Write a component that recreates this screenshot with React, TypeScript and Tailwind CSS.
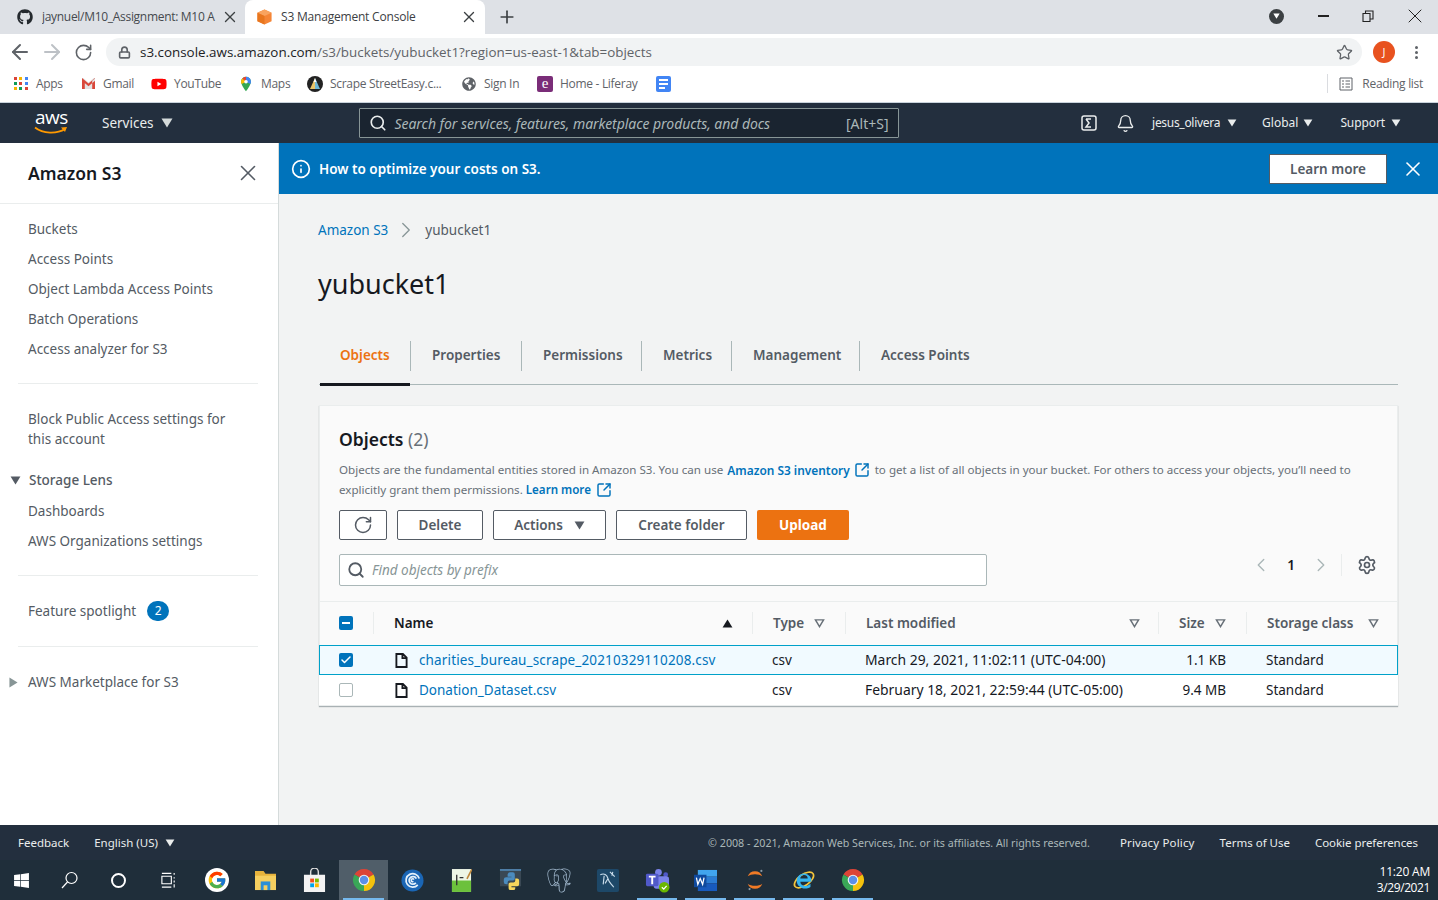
import { ArrowLeft, ArrowRight, RotateCw, Lock, Star, Plus, X, Search, Bell, Info, ChevronRight, ChevronLeft, Settings, SquareArrowOutUpRight, Check } from "lucide-react";
import { FaGithub, FaYoutube, FaGlobeAmericas, FaWindows } from "react-icons/fa";
import { FcGoogle } from "react-icons/fc";
import { SiPostgresql } from "react-icons/si";

const ember = "font-['Noto_Sans','Open_Sans',sans-serif]";

function Caret({ className = "" }: { className?: string }) {
  return (
    <svg viewBox="0 0 12 10" className={className}>
      <path d="M0.500 0.500h11L6 9.500z" fill="currentColor" />
    </svg>
  );
}

function HollowCaret() {
  return (
    <svg viewBox="0 0 12 10" className="w-[11px] h-[9px] text-[#687078]">
      <path d="M1.500 1h9L6 8.500z" fill="none" stroke="currentColor" strokeWidth="1.6" />
    </svg>
  );
}

function ChromeLogo({ size = 24 }: { size?: number }) {
  return (
    <svg viewBox="0 0 24 24" width={size} height={size}>
      <path d="M12 12L2.470 6.500A11 11 0 0 1 21.530 6.500z" fill="#db4437" />
      <path d="M12 12L21.530 6.500A11 11 0 0 1 12 23z" fill="#f4c20d" />
      <path d="M12 12L12 23A11 11 0 0 1 2.470 6.500z" fill="#3aa757" />
      <circle cx="12" cy="12" r="5.300" fill="#f1f3f4" />
      <circle cx="12" cy="12" r="4.200" fill="#5b8fe8" />
    </svg>
  );
}

function Tabs() {
  return (
    <div className="h-[34px] bg-[#dee1e6] flex items-end pl-2 font-['Open_Sans',sans-serif] text-[12px] text-[#45494e]">
      <div className="w-[237px] h-[34px] flex items-center pl-[9px]">
        <FaGithub className="w-4 h-4 text-[#24292e] mr-[9px] shrink-0" />
        <span className="w-[176px] overflow-hidden whitespace-nowrap tracking-[-0.3px]">jaynuel/M10_Assignment: M10 A</span>
        <X className="w-[18px] h-[18px] text-[#3c4043] ml-[3px]" strokeWidth={1.8} />
      </div>
      <div className="w-[240px] h-[34px] bg-white rounded-t-lg flex items-center pl-[11px] pr-[7px] text-[#3c4043]">
        <svg viewBox="0 0 18 18" className="w-[17px] h-[18px] mr-[8px]">
          <path d="M9 1l7.500 3.500v9L9 17l-7.500-3.500v-9z" fill="#f58536" />
          <path d="M9 1l7.500 3.500L9 8 1.500 4.500z" fill="#f9a35f" />
          <path d="M9 8v9l-7.500-3.500v-9z" fill="#e8761e" />
        </svg>
        <span className="flex-1 tracking-[-0.2px]">S3 Management Console</span>
        <X className="w-[18px] h-[18px] text-[#3c4043]" strokeWidth={1.8} />
      </div>
      <div className="h-[34px] flex items-center ml-[12px]">
        <Plus className="w-[20px] h-[20px] text-[#3c4043]" strokeWidth={2} />
      </div>
      <div className="flex-1" />
      <div className="h-[34px] flex items-center pb-[2px]">
        <div className="w-[15px] h-[15px] rounded-full bg-[#3c4043] flex items-center justify-center mr-[34px]">
          <Caret className="w-[7px] h-[6px] text-white" />
        </div>
        <span className="w-[11px] h-[1.500px] bg-[#222] mr-[33px]" />
        <svg viewBox="0 0 12 12" className="w-[12px] h-[12px] mr-[29px] text-[#222]">
          <path d="M1 3.500h7v8H1zM3.500 3.500V1h7.500v8H8" fill="none" stroke="currentColor" strokeWidth="1.100" />
        </svg>
        <X className="w-[24px] h-[24px] text-[#222] mr-[11px]" strokeWidth={1} />
      </div>
    </div>
  );
}

function AddressBar() {
  return (
    <div className="h-[34px] bg-white flex items-center pt-[2px] font-['Open_Sans',sans-serif]">
      <ArrowLeft className="w-[24px] h-[24px] text-[#5f6368] ml-[8px]" strokeWidth={2} />
      <ArrowRight className="w-[24px] h-[24px] text-[#bdc1c6] ml-[8px]" strokeWidth={2} />
      <RotateCw className="w-[19px] h-[19px] text-[#5f6368] ml-[10px]" strokeWidth={2} />
      <div className="ml-[13px] w-[1256px] h-[28px] rounded-full bg-[#f1f3f4] flex items-center pl-[12px] pr-[9px]">
        <Lock className="w-[13px] h-[13px] text-[#5f6368] mr-[9px]" strokeWidth={3} />
        <span className="text-[13.400px] text-[#202124] flex-1">
          s3.console.aws.amazon.com<span className="text-[#5f6368]">/s3/buckets/yubucket1?region=us-east-1&amp;tab=objects</span>
        </span>
        <Star className="w-[17px] h-[17px] text-[#5f6368]" strokeWidth={1.8} />
      </div>
      <div className="ml-[11px] w-[22px] h-[22px] rounded-full bg-[#e8521f] text-white text-[11px] flex items-center justify-center">J</div>
      <div className="ml-[20px] flex flex-col gap-[2px]">
        <span className="w-[3px] h-[3px] rounded-full bg-[#5f6368]" />
        <span className="w-[3px] h-[3px] rounded-full bg-[#5f6368]" />
        <span className="w-[3px] h-[3px] rounded-full bg-[#5f6368]" />
      </div>
    </div>
  );
}

function Bookmark({ icon, label, w }: { icon: React.ReactNode; label: string; w: string }) {
  return (
    <div className={`flex items-center ${w}`}>
      <span className="w-[16px] h-[16px] flex items-center justify-center mr-[7px] shrink-0">{icon}</span>
      <span className="text-[12px] text-[#5f6368] tracking-[-0.3px] whitespace-nowrap">{label}</span>
    </div>
  );
}

function Bookmarks() {
  const dots = ["#db4437", "#f4b400", "#4285f4", "#0f9d58", "#db4437", "#4285f4", "#f4b400", "#0f9d58", "#db4437"];
  return (
    <div className="h-[35px] bg-white border-b border-[#c9d3dc] flex items-center pl-[13px] pb-[3px] font-['Open_Sans',sans-serif]">
      <Bookmark
        w="w-[67px]"
        label="Apps"
        icon={
          <span className="grid grid-cols-3 gap-[2px] w-[14px]">
            {dots.map((c, i) => (
              <span key={i} className="w-[3px] h-[3px]" style={{ background: c }} />
            ))}
          </span>
        }
      />
      <Bookmark
        w="w-[71px]"
        label="Gmail"
        icon={
          <svg viewBox="0 0 16 14" className="w-[15px] h-[13px]">
            <path d="M1 13V1h1.500L8 6l5.500-5H15v12z" fill="#e3e3e3" />
            <path d="M1 13V1.500l3 2.500V13zM15 13V1.500l-3 2.500V13zM1 1l7 6 7-6v3L8 10 1 4z" fill="#d9473a" />
          </svg>
        }
      />
      <Bookmark w="w-[87px]" label="YouTube" icon={<FaYoutube className="w-[16px] h-[16px] text-[#f00]" />} />
      <Bookmark
        w="w-[69px]"
        label="Maps"
        icon={
          <svg viewBox="0 0 14 18" className="w-[12px] h-[16px]">
            <path d="M7 0.500A5.800 5.800 0 0 0 1.200 6.300C1.200 10 7 17.500 7 17.500S12.800 10 12.800 6.300A5.800 5.800 0 0 0 7 0.500z" fill="#34a853" />
            <path d="M7 0.500A5.800 5.800 0 0 0 2.600 2.500l4.400 4z" fill="#ea4335" />
            <path d="M7 0.500a5.800 5.800 0 0 1 5.800 5.800c0 .8-.3 1.800-.8 2.800L7 6.500z" fill="#4285f4" />
            <path d="M2.600 2.500A5.800 5.800 0 0 0 1.200 6.300c0 .9.3 1.800.8 2.800L7 6.500z" fill="#fbbc04" />
            <circle cx="7" cy="6.300" r="2.100" fill="#fff" />
          </svg>
        }
      />
      <Bookmark
        w="w-[154px]"
        label="Scrape StreetEasy.c..."
        icon={
          <svg viewBox="0 0 16 16" className="w-[16px] h-[16px]">
            <circle cx="8" cy="8" r="8" fill="#222" />
            <path d="M8 2l-5 11h5z" fill="#e9c46a" />
            <path d="M8 2l5 11H8z" fill="#6fb7d6" />
            <path d="M8 2l-1.500 4h3z" fill="#fff" />
          </svg>
        }
      />
      <Bookmark w="w-[76px]" label="Sign In" icon={<FaGlobeAmericas className="w-[14px] h-[14px] text-[#5f6368]" />} />
      <Bookmark
        w="w-[119px]"
        label="Home - Liferay"
        icon={
          <span className="w-[16px] h-[16px] rounded-[2px] bg-[#7a2d78] text-white text-[15px] leading-[15px] text-center font-['Liberation_Serif',serif]">e</span>
        }
      />
      <span className="w-[15px] h-[16px] rounded-[2px] bg-[#4285f4] flex flex-col justify-center gap-[2px] px-[3px]">
        <span className="h-[2px] w-[9px] bg-white" />
        <span className="h-[2px] w-[9px] bg-white" />
        <span className="h-[2px] w-[6px] bg-white" />
      </span>
      <div className="flex-1" />
      <div className="w-px h-[19px] bg-[#dadce0] mr-[11px]" />
      <svg viewBox="0 0 14 14" className="w-[14px] h-[14px] mr-[9px] text-[#5f6368]">
        <path d="M1 1h12v12H1zM3 4h2M3 7h2M3 10h2M6.500 4h4.500M6.500 7h4.500M6.500 10h4.500" fill="none" stroke="currentColor" strokeWidth="1" />
      </svg>
      <span className="text-[12px] text-[#5f6368] tracking-[-0.3px] mr-[15px]">Reading list</span>
    </div>
  );
}

function AwsNav() {
  return (
    <div className={`h-[40px] bg-[#232f3e] flex items-center text-[12px] text-[#eaeded] ${ember}`}>
      <div className="w-[102px] relative h-full">
        <span className="absolute left-[35px] top-[2px] text-[19px] leading-[24px] text-white font-['Open_Sans',sans-serif] tracking-[-0.5px]">aws</span>
        <svg viewBox="0 0 34 10" className="absolute left-[34px] top-[23px] w-[34px] h-[10px]">
          <path d="M1 1.500C9 8 23 8 31 3" fill="none" stroke="#ff9900" strokeWidth="1.800" />
          <path d="M27 1.500l6-.5-2 5z" fill="#ff9900" />
        </svg>
      </div>
      <span className="text-[13.500px]">Services</span>
      <Caret className="w-[12px] h-[10px] ml-[7px] text-[#d5dbdb]" />
      <div className="ml-[186px] w-[540px] h-[30px] border border-[#879596] bg-[#1a2430] flex items-center pl-[9px] pr-[9px] rounded-[1px]">
        <Search className="w-[18px] h-[18px] text-[#eaeded] mr-[8px]" strokeWidth={2.2} />
        <span className="flex-1 italic text-[#aab7b8] text-[14px] tracking-[-0.05px]">Search for services, features, marketplace products, and docs</span>
        <span className="text-[#aab7b8] text-[14px]">[Alt+S]</span>
      </div>
      <div className="flex-1" />
      <svg viewBox="0 0 16 16" className="w-[16px] h-[16px] mr-[19px]">
        <rect x="1" y="1" width="14" height="14" rx="2" fill="none" stroke="#eaeded" strokeWidth="1.500" />
        <path d="M5 4h5M5 4l3 4-3 4h5" fill="none" stroke="#eaeded" strokeWidth="1.500" />
      </svg>
      <Bell className="w-[19px] h-[19px] mr-[17px]" strokeWidth={1.7} />
      <span className="tracking-[-0.3px]">jesus_olivera</span>
      <Caret className="w-[10px] h-[8px] ml-[7px] mr-[25px]" />
      <span>Global</span>
      <Caret className="w-[10px] h-[8px] ml-[5px] mr-[27px]" />
      <span className="tracking-[-0.1px]">Support</span>
      <Caret className="w-[10px] h-[8px] ml-[6px] mr-[37px]" />
    </div>
  );
}

function Sidebar() {
  const link = "text-[13.500px] leading-[20px] text-[#545b64]";
  return (
    <aside className={`w-[279px] shrink-0 bg-white border-r border-[#d5dbdb] ${ember}`}>
      <div className="h-[61px] border-b border-[#eaeded] flex items-center pl-[28px] pr-[17px]">
        <span className="text-[17.500px] font-semibold text-[#16191f] flex-1 pt-[1px]">Amazon S3</span>
        <X className="w-[26px] h-[26px] text-[#545b64]" strokeWidth={1.5} />
      </div>
      <div className="pl-[28px] pt-[15px] flex flex-col gap-[10px]">
        <span className={link}>Buckets</span>
        <span className={link}>Access Points</span>
        <span className={link}>Object Lambda Access Points</span>
        <span className={link}>Batch Operations</span>
        <span className={link}>Access analyzer for S3</span>
      </div>
      <div className="ml-[18px] mr-[20px] mt-[24px] border-t border-[#eaeded]" />
      <div className="pl-[28px] pt-[25px]">
        <p className={`${link} w-[215px]`}>Block Public Access settings for this account</p>
      </div>
      <div className="pl-[10px] mt-[21px] flex items-center">
        <Caret className="w-[11px] h-[9px] text-[#545b64] mr-[8px]" />
        <span className="text-[13.500px] leading-[20px] font-medium text-[#545b64]">Storage Lens</span>
      </div>
      <div className="pl-[28px] pt-[11px] flex flex-col gap-[10px]">
        <span className={link}>Dashboards</span>
        <span className={link}>AWS Organizations settings</span>
      </div>
      <div className="ml-[18px] mr-[20px] mt-[24px] border-t border-[#eaeded]" />
      <div className="pl-[28px] pt-[25px] flex items-center">
        <span className={link}>Feature spotlight</span>
        <span className="ml-[11px] w-[22px] h-[20px] rounded-full bg-[#0073bb] text-white text-[12px] flex items-center justify-center">2</span>
      </div>
      <div className="ml-[18px] mr-[20px] mt-[25px] border-t border-[#eaeded]" />
      <div className="pl-[9px] pt-[25px] flex items-center">
        <svg viewBox="0 0 10 12" className="w-[9px] h-[11px] text-[#879596] mr-[10px]">
          <path d="M0.500 0.500v11L9.500 6z" fill="currentColor" />
        </svg>
        <span className={link}>AWS Marketplace for S3</span>
      </div>
    </aside>
  );
}

function Banner() {
  return (
    <div className="h-[51px] bg-[#0073bb] flex items-center pl-[12px] pr-[13px] text-white">
      <Info className="w-[20px] h-[20px] mr-[8px]" strokeWidth={2} />
      <span className="text-[13.500px] font-semibold flex-1 pt-[1px]">How to optimize your costs on S3.</span>
      <div className="w-[118px] h-[30px] pt-[1px] bg-white border border-[#545b64] text-[#545b64] text-[13.500px] font-semibold flex items-center justify-center mr-[14px]">
        Learn more
      </div>
      <X className="w-[24px] h-[24px]" strokeWidth={1.6} />
    </div>
  );
}

function ToolButton({ children, w }: { children: React.ReactNode; w: string }) {
  return (
    <div className={`${w} h-[30px] bg-white border border-[#545b64] rounded-[2px] text-[13.500px] font-semibold text-[#545b64] flex items-center justify-center`}>
      {children}
    </div>
  );
}

function Checkbox({ state }: { state: "on" | "off" | "mixed" }) {
  if (state === "off") return <span className="block w-[14px] h-[14px] rounded-[2px] bg-white border border-[#aab7b8]" />;
  return (
    <span className="w-[14px] h-[14px] rounded-[2px] bg-[#0073bb] flex items-center justify-center">
      {state === "on" ? <Check className="w-[12px] h-[12px] text-white" strokeWidth={3} /> : <span className="w-[8px] h-[2px] bg-white" />}
    </span>
  );
}

function FileIcon() {
  return (
    <svg viewBox="0 0 14 16" className="w-[13px] h-[15px] mr-[11px] text-[#16191f]">
      <path d="M1.500 1h7l4 4v10h-11zM8 1v4.500h4.500" fill="none" stroke="currentColor" strokeWidth="2" />
    </svg>
  );
}

const columns = "grid-cols-[53px_379px_93px_313px_88px_1fr]";

function HeaderCell({ label }: { label: string }) {
  return (
    <div className="h-[22px] border-l border-[#eaeded] flex items-center pl-[20px] gap-[10px]">
      <span>{label}</span>
      <HollowCaret />
    </div>
  );
}

function FileRow({ name, modified, size, selected }: { name: string; modified: string; size: string; selected?: boolean }) {
  return (
    <div className={`grid ${columns} -mx-px h-[30px] items-center text-[13.500px] text-[#16191f] ${selected ? "bg-[#f1faff] border border-[#00a1c9]" : "bg-white border border-transparent"}`}>
      <div className="pl-[19px]">
        <Checkbox state={selected ? "on" : "off"} />
      </div>
      <div className="flex items-center pl-[22px]">
        <FileIcon />
        <span className={`text-[#0073bb] ${selected ? "tracking-[0.14px]" : ""}`}>{name}</span>
      </div>
      <div className="pl-[20px]">csv</div>
      <div className="pl-[20px] whitespace-nowrap text-[13.900px]">{modified}</div>
      <div className="pr-[20px] text-right">{size}</div>
      <div className="pl-[20px]">Standard</div>
    </div>
  );
}

function ObjectsCard() {
  return (
    <section className="mx-[40px] mt-[20px] bg-[#fafafa] border border-[#eaeded] shadow-[0_1px_1px_0_rgba(0,28,36,0.3)]">
      <div className="pl-[19px] pr-[20px] pt-[21px] h-[195px]">
        <h2 className="text-[17.500px] leading-[24px] font-semibold text-[#16191f]">
          Objects <span className="font-normal text-[#687078]">(2)</span>
        </h2>
        <div className="mt-[9px] text-[11.600px] leading-[20px] text-[#687078] whitespace-nowrap">
          <div className="flex items-center h-[20px]">
            <span>Objects are the fundamental entities stored in Amazon S3. You can use</span>
            <span className="ml-[4px] text-[11.900px] text-[#0073bb] font-semibold">Amazon S3 inventory</span>
            <SquareArrowOutUpRight className="w-[16px] h-[16px] text-[#0073bb] ml-[4px] mr-[5px]" strokeWidth={2.2} />
            <span>to get a list of all objects in your bucket. For others to access your objects, you’ll need to</span>
          </div>
          <div className="flex items-center h-[20px]">
            <span>explicitly grant them permissions.</span>
            <span className="ml-[3px] text-[#0073bb] font-semibold">Learn more</span>
            <SquareArrowOutUpRight className="w-[16px] h-[16px] text-[#0073bb] ml-[5px]" strokeWidth={2.2} />
          </div>
        </div>
        <div className="mt-[10px] flex gap-[10px]">
          <ToolButton w="w-[48px]">
            <RotateCw className="w-[20px] h-[20px]" strokeWidth={1.8} />
          </ToolButton>
          <ToolButton w="w-[86px]">Delete</ToolButton>
          <ToolButton w="w-[113px]">
            Actions
            <Caret className="w-[11px] h-[9px] ml-[11px]" />
          </ToolButton>
          <ToolButton w="w-[131px]">Create folder</ToolButton>
          <div className="w-[92px] h-[30px] bg-[#ec7211] rounded-[2px] text-[13.500px] font-bold text-white flex items-center justify-center">Upload</div>
        </div>
        <div className="mt-[14px] flex items-start">
          <div className="w-[648px] h-[32px] bg-white border border-[#aab7b8] rounded-[2px] flex items-center pl-[7px]">
            <Search className="w-[18px] h-[18px] text-[#545b64] mr-[7px]" strokeWidth={2.4} />
            <span className="italic text-[13.500px] text-[#879596]">Find objects by prefix</span>
          </div>
          <div className="flex-1" />
          <div className="flex items-center h-[22px] text-[#16191f]">
            <ChevronLeft className="w-[22px] h-[22px] text-[#aab7b8]" strokeWidth={1.5} />
            <span className="text-[13.500px] font-semibold mx-[15px]">1</span>
            <ChevronRight className="w-[22px] h-[22px] text-[#aab7b8]" strokeWidth={1.5} />
            <div className="w-px h-[22px] bg-[#eaeded] ml-[9px] mr-[15px]" />
            <Settings className="w-[20px] h-[20px] text-[#545b64]" strokeWidth={2} />
          </div>
        </div>
      </div>
      <div className="border-t border-[#eaeded] h-[44px]">
        <div className={`grid ${columns} h-full items-center text-[13.500px] font-semibold text-[#545b64] pb-[1px]`}>
          <div className="pl-[19px]">
            <Checkbox state="mixed" />
          </div>
          <div className="h-[22px] border-l border-[#eaeded] flex items-center pl-[20px] pr-[19px] justify-between text-[#16191f]">
            <span>Name</span>
            <Caret className="w-[11px] h-[9px] text-[#16191f] rotate-180" />
          </div>
          <HeaderCell label="Type" />
          <div className="h-[22px] border-l border-[#eaeded] flex items-center pl-[20px] pr-[18px] justify-between">
            <span>Last modified</span>
            <HollowCaret />
          </div>
          <HeaderCell label="Size" />
          <div className="h-[22px] border-l border-[#eaeded] flex items-center pl-[20px] pr-[18px] justify-between">
            <span>Storage class</span>
            <HollowCaret />
          </div>
        </div>
      </div>
      <FileRow selected name="charities_bureau_scrape_20210329110208.csv" modified="March 29, 2021, 11:02:11 (UTC-04:00)" size="1.1 KB" />
      <FileRow name="Donation_Dataset.csv" modified="February 18, 2021, 22:59:44 (UTC-05:00)" size="9.4 MB" />
    </section>
  );
}

function Main() {
  const tab = "h-[30px] pl-[21px] flex items-center border-l border-[#aab7b8]";
  return (
    <main className={`flex-1 min-w-0 bg-[#f2f3f3] ${ember}`}>
      <Banner />
      <div className="pl-[39px] pt-[26px] flex items-center text-[13.500px] leading-[20px]">
        <span className="text-[#0073bb]">Amazon S3</span>
        <ChevronRight className="w-[26px] h-[26px] ml-[5px] mr-[6px] -my-[3px] text-[#879596]" strokeWidth={1.2} />
        <span className="text-[#545b64]">yubucket1</span>
      </div>
      <h1 className="pl-[39px] mt-[26px] text-[27px] leading-[36px] text-[#16191f]">yubucket1</h1>
      <div className="mx-[40px] mt-[25px] h-[58px] border-b border-[#aab7b8] flex items-center text-[13.500px] font-semibold text-[#545b64]">
        <div className="relative h-[58px] w-[91px] pl-[21px] flex items-center text-[#ec7211]">
          Objects
          <span className="absolute left-[1px] right-0 bottom-[-1px] h-[3px] bg-[#16191f]" />
        </div>
        <div className={`${tab} w-[111px]`}>Properties</div>
        <div className={`${tab} w-[120px]`}>Permissions</div>
        <div className={`${tab} w-[90px]`}>Metrics</div>
        <div className={`${tab} w-[128px]`}>Management</div>
        <div className={tab}>Access Points</div>
      </div>
      <ObjectsCard />
    </main>
  );
}

function Footer() {
  return (
    <div className={`h-[35px] bg-[#232f3e] flex items-center pl-[18px] text-[11.500px] text-[#eaeded] ${ember}`}>
      <span>Feedback</span>
      <span className="ml-[25px]">English (US)</span>
      <Caret className="w-[10px] h-[8px] ml-[7px]" />
      <div className="flex-1" />
      <span className="text-[10.700px] text-[#aab7b8] pt-[1px]">© 2008 - 2021, Amazon Web Services, Inc. or its affiliates. All rights reserved.</span>
      <span className="ml-[30px] tracking-[0.15px]">Privacy Policy</span>
      <span className="ml-[25px]">Terms of Use</span>
      <span className="ml-[25px] mr-[20px] tracking-[-0.05px]">Cookie preferences</span>
    </div>
  );
}

function TaskIcon({ children, open, active }: { children: React.ReactNode; open?: boolean; active?: boolean }) {
  return (
    <div className={`w-[48.900px] h-[40px] flex items-center justify-center relative ${active ? "bg-[#505e69]" : ""}`}>
      {children}
      {open && <span className="absolute bottom-0 left-[4px] right-[4px] h-[2px] bg-[#76b9ed]" />}
    </div>
  );
}

function Taskbar() {
  return (
    <div className="h-[40px] bg-[#1f2e3a] flex items-center pl-0 font-['Open_Sans',sans-serif] overflow-hidden">
      <div className="flex items-center -ml-[3px]">
        <TaskIcon>
          <FaWindows className="w-[17px] h-[17px] text-white" />
        </TaskIcon>
        <TaskIcon>
          <svg viewBox="0 0 18 18" className="w-[18px] h-[18px]">
            <circle cx="10.500" cy="7" r="5.500" fill="none" stroke="#fff" strokeWidth="1.200" />
            <path d="M6.500 11L1 17" stroke="#fff" strokeWidth="1.200" />
          </svg>
        </TaskIcon>
        <TaskIcon>
          <span className="w-[15px] h-[15px] rounded-full border-2 border-white -ml-[2px]" />
        </TaskIcon>
        <TaskIcon>
          <svg viewBox="0 0 18 18" className="w-[17px] h-[17px]">
            <path d="M2 4.500h10v8H2zM2 1.500h10M2 16h10M15 1v2M15 5.500v1.500M15 9v2M15 13v3.500" stroke="#fff" strokeWidth="1.200" fill="none" />
          </svg>
        </TaskIcon>
        <TaskIcon>
          <span className="w-[24px] h-[24px] rounded-full bg-white flex items-center justify-center">
            <FcGoogle className="w-[20px] h-[20px]" />
          </span>
        </TaskIcon>
        <TaskIcon>
          <svg viewBox="0 0 24 22" className="w-[23px] h-[21px]">
            <path d="M1 1h9l2 3h11v17H1z" fill="#e7b33c" />
            <rect x="1" y="6" width="22" height="15" fill="#f6cf5f" />
            <rect x="7" y="12" width="10" height="9" fill="#2c8fd6" />
            <rect x="10" y="16" width="4" height="5" fill="#f6cf5f" />
          </svg>
        </TaskIcon>
        <TaskIcon>
          <svg viewBox="0 0 24 26" className="w-[23px] h-[25px]">
            <path d="M8 8V4a4 4 0 0 1 8 0v4" fill="none" stroke="#ddd" strokeWidth="1.500" />
            <rect x="1" y="7" width="22" height="18" fill="#f3f3f3" />
            <rect x="7.500" y="11" width="4" height="4" fill="#f25022" />
            <rect x="12.500" y="11" width="4" height="4" fill="#7fba00" />
            <rect x="7.500" y="16" width="4" height="4" fill="#00a4ef" />
            <rect x="12.500" y="16" width="4" height="4" fill="#ffb900" />
          </svg>
        </TaskIcon>
        <TaskIcon open active>
          <ChromeLogo size={24} />
        </TaskIcon>
        <TaskIcon>
          <svg viewBox="0 0 24 24" className="w-[23px] h-[23px]">
            <circle cx="12" cy="12" r="11.500" fill="#1a66b5" />
            <path d="M17.500 16.500A7 7 0 1 1 19 10" fill="none" stroke="#e4f1fb" strokeWidth="1.800" />
            <path d="M15.500 14.500A4 4 0 1 1 16 10" fill="none" stroke="#e4f1fb" strokeWidth="1.800" />
            <path d="M13 13a1.500 1.500 0 1 1 .5-2" fill="none" stroke="#e4f1fb" strokeWidth="1.600" />
          </svg>
        </TaskIcon>
        <TaskIcon>
          <svg viewBox="0 0 22 26" className="w-[21px] h-[25px]">
            <rect x="1" y="1" width="20" height="24" fill="#eef6e6" />
            <rect x="1" y="13" width="20" height="12" fill="#6cc13c" />
            <path d="M6 7v11M9 10h4" stroke="#333" strokeWidth="1.400" />
            <path d="M16 11l5-10 1.500.8-5 10z" fill="#c08a3e" />
          </svg>
        </TaskIcon>
        <TaskIcon>
          <svg viewBox="0 0 24 26" className="w-[23px] h-[25px]">
            <rect x="1" y="1" width="22" height="18" fill="#3a4854" />
            <rect x="1" y="1" width="22" height="2" fill="#4e7ea6" />
            <path d="M9 9V6.500a3 3 0 0 1 3-2h2.500a2 2 0 0 1 2 2V11a2 2 0 0 1-2 2H11a2 2 0 0 0-2 2v2H7.500a2.500 2.500 0 0 1-2.500-2.500V12a2.500 2.500 0 0 1 2.500-2.500H13V9z" fill="#4b8bbe" />
            <path d="M17 11v2a2 2 0 0 1-2 2h-3a2 2 0 0 0-2 2v4a2 2 0 0 0 2 2h3a2 2 0 0 0 2-2v-1h-4v-1h6a2 2 0 0 0 2-2v-4a2 2 0 0 0-2-2z" fill="#f6d55c" />
          </svg>
        </TaskIcon>
        <TaskIcon>
          <SiPostgresql className="w-[24px] h-[25px] text-[#9fb6cb]" />
        </TaskIcon>
        <TaskIcon>
          <svg viewBox="0 0 24 26" className="w-[24px] h-[25px]">
            <rect x="0.500" y="1" width="23" height="24" rx="2" fill="#1d4868" />
            <path d="M4 7c4-2 7 0 8 4s3 5 6 9M8 8l-1 9M12 11l-3 5M14 4l5 5M17 4l-1 4" fill="none" stroke="#c9dcea" strokeWidth="1.200" />
          </svg>
        </TaskIcon>
        <TaskIcon open>
          <svg viewBox="0 0 26 26" className="w-[25px] h-[25px]">
            <circle cx="14" cy="4.500" r="3.500" fill="#7b83eb" />
            <circle cx="21.500" cy="7" r="2.500" fill="#5059c9" />
            <rect x="9" y="8.500" width="16" height="13" rx="3" fill="#7b83eb" />
            <rect x="1" y="6" width="13" height="13" rx="1.500" fill="#5059c9" />
            <path d="M4 9h7M7.500 9v8" stroke="#fff" strokeWidth="2" />
            <circle cx="20" cy="20" r="5.500" fill="#6bb700" />
            <path d="M17.500 20l2 2 3-3.500" fill="none" stroke="#fff" strokeWidth="1.300" />
          </svg>
        </TaskIcon>
        <TaskIcon open>
          <svg viewBox="0 0 26 24" className="w-[25px] h-[23px]">
            <rect x="5" y="1" width="20" height="7" fill="#41a5ee" />
            <rect x="5" y="8" width="20" height="7" fill="#2b7cd3" />
            <rect x="5" y="15" width="20" height="8" fill="#185abd" />
            <rect x="1" y="6" width="13" height="13" fill="#0f4a9e" />
            <path d="M3.500 9l1.500 7 2.500-6 2.500 6 1.500-7" fill="none" stroke="#fff" strokeWidth="1.300" />
          </svg>
        </TaskIcon>
        <TaskIcon open>
          <svg viewBox="0 0 22 26" className="w-[20px] h-[24px]">
            <path d="M3 9a8.500 8.500 0 0 1 16 0c-3.500-3-12.500-3-16 0zM3 17a8.500 8.500 0 0 0 16 0c-3.500 3-12.500 3-16 0z" fill="#ef7a26" />
            <circle cx="5" cy="23" r="1.200" fill="#8a9aa6" />
            <circle cx="18" cy="3" r="1.200" fill="#8a9aa6" />
          </svg>
        </TaskIcon>
        <TaskIcon open>
          <svg viewBox="0 0 26 26" className="w-[24px] h-[24px]">
            <ellipse cx="13" cy="13" rx="12" ry="6" fill="none" stroke="#f5c63c" strokeWidth="1.800" transform="rotate(-35 13 13)" />
            <path d="M5 13a8 8 0 0 1 16 2H9c0 5 7 6 11 2v3.500c-6 4-15 1-15-7.500zM9 11.500h8a4 4 0 0 0-8 0z" fill="#35b5f0" fillRule="evenodd" />
          </svg>
        </TaskIcon>
        <TaskIcon open>
          <ChromeLogo size={24} />
        </TaskIcon>
      </div>
      <div className="flex-1" />
      <div className="text-right text-[12px] leading-[16px] text-white pr-[8px] tracking-[-0.2px]">
        <div>11:20 AM</div>
        <div className="tracking-[-0.4px]">3/29/2021</div>
      </div>
    </div>
  );
}

export default function App() {
  return (
    <div className="w-[1438px] h-[900px] flex flex-col overflow-hidden bg-white">
      <Tabs />
      <AddressBar />
      <Bookmarks />
      <AwsNav />
      <div className="flex flex-1 min-h-0">
        <Sidebar />
        <Main />
      </div>
      <Footer />
      <Taskbar />
    </div>
  );
}
